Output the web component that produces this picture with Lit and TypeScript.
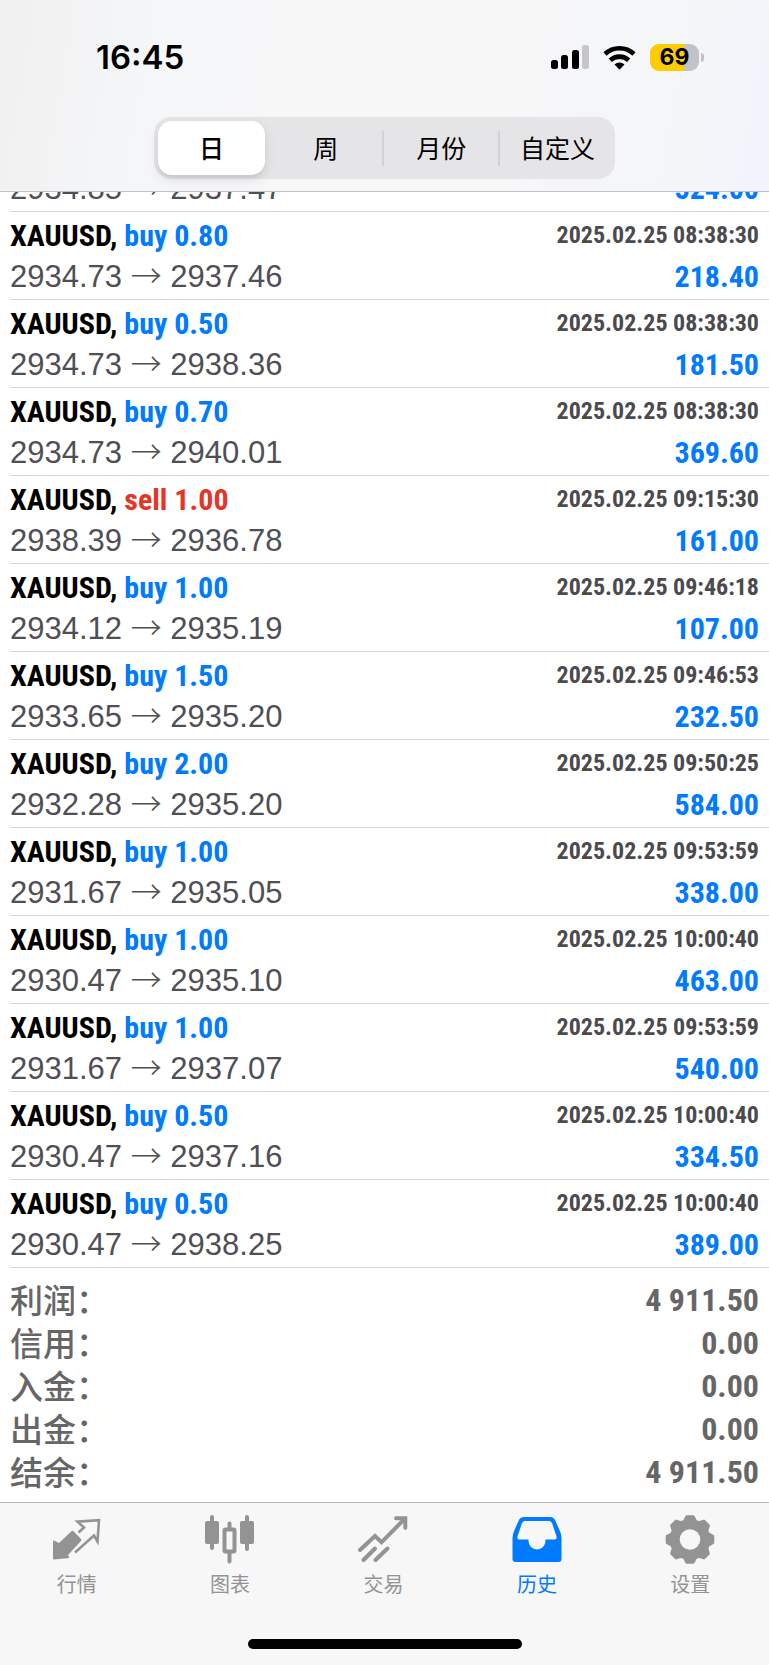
import { LitElement, html, svg, css, nothing } from "lit";
import { customElement, property, state } from "lit/decorators.js";
import { classMap } from "lit/directives/class-map.js";

interface Deal {
  side: "buy" | "sell";
  volume: string;
  open: string;
  close: string;
  time: string;
  profit: string;
}

const deal = (
  side: "buy" | "sell",
  volume: string,
  open: string,
  close: string,
  time: string,
  profit: string
): Deal => ({ side, volume, open, close, time: `2025.02.25 ${time}`, profit });

// The first deal is scrolled half under the header; only its price line shows.
const DEALS: Deal[] = [
  deal("buy", "", "2934.85", "2937.47", "", "524.00"),
  deal("buy", "0.80", "2934.73", "2937.46", "08:38:30", "218.40"),
  deal("buy", "0.50", "2934.73", "2938.36", "08:38:30", "181.50"),
  deal("buy", "0.70", "2934.73", "2940.01", "08:38:30", "369.60"),
  deal("sell", "1.00", "2938.39", "2936.78", "09:15:30", "161.00"),
  deal("buy", "1.00", "2934.12", "2935.19", "09:46:18", "107.00"),
  deal("buy", "1.50", "2933.65", "2935.20", "09:46:53", "232.50"),
  deal("buy", "2.00", "2932.28", "2935.20", "09:50:25", "584.00"),
  deal("buy", "1.00", "2931.67", "2935.05", "09:53:59", "338.00"),
  deal("buy", "1.00", "2930.47", "2935.10", "10:00:40", "463.00"),
  deal("buy", "1.00", "2931.67", "2937.07", "09:53:59", "540.00"),
  deal("buy", "0.50", "2930.47", "2937.16", "10:00:40", "334.50"),
  deal("buy", "0.50", "2930.47", "2938.25", "10:00:40", "389.00"),
];

const SUMMARY: [string, string][] = [
  ["利润：", "4 911.50"],
  ["信用：", "0.00"],
  ["入金：", "0.00"],
  ["出金：", "0.00"],
  ["结余：", "4 911.50"],
];

const PERIODS = ["日", "周", "月份", "自定义"];

// Outline of a gear with eight rounded teeth around (25, 25).
const gearPath = (() => {
  const points: string[] = [];
  const at = (radius: number, degrees: number) => {
    const a = (degrees * Math.PI) / 180;
    return `${(25 + radius * Math.sin(a)).toFixed(2)} ${(24.5 - radius * Math.cos(a)).toFixed(2)}`;
  };
  for (let i = 0; i < 8; i++) {
    const c = i * 45;
    points.push(at(19, c - 17), at(23, c - 8), at(23, c + 8), at(19, c + 17));
  }
  return `M${points.join("L")}Z`;
})();

const ICONS = {
  quotes: svg`
    <path d="M1 26.500V43.500q0 1 1 1L17.500 43l-1.500-3L29 26q1-1 0-2L21.500 16.300q-1-1-2 0L7 28 3 26q-2-1-2 .5z" fill="currentColor"/>
    <path d="M23 37.500L42 20.500 45.500 26.500 47 5.200 25.500 6.700 32 12.500 26.500 17.500" fill="none" stroke="currentColor" stroke-width="2.600"/>`,
  charts: svg`
    <g fill="currentColor">
      <rect x="0" y="6" width="14" height="23" rx="2"/><rect x="5" y="0" width="4" height="35" rx="2"/>
      <rect x="35" y="6" width="14" height="23" rx="2"/><rect x="40" y="0" width="4" height="36" rx="2"/>
      <rect x="22.500" y="6.500" width="4" height="9" rx="2"/><rect x="22.500" y="36" width="4" height="12.500" rx="2"/>
    </g>
    <rect x="19.500" y="14.500" width="10" height="22" rx="1" fill="none" stroke="currentColor" stroke-width="4"/>`,
  trade: svg`
    <g fill="none" stroke="currentColor" stroke-width="4" stroke-linecap="round" stroke-linejoin="miter">
      <path d="M2 35L17 21 23.500 27.300 46.500 4"/><path d="M38 3.300h9.300v9.400"/>
      <path d="M5.500 45L17 33.500"/><path d="M17.500 45L29.500 33.500"/>
    </g>`,
  history: svg`
    <path fill="currentColor" fill-rule="evenodd" d="M12 2h26q4 0 5.500 4l4 9q2 4 2 8v21q0 3-3 3h-43q-3 0-3-3V23q0-4 2-8l4-9Q8 2 12 2zM13 6q-2 0-3 2L5.500 21.500Q5 24.500 7 24.500h9.500V26a8.500 8.500 0 0 0 17 0v-1.500H43q2 0 1.500-3L40 8q-1-2-3-2z"/>`,
  settings: svg`
    <path d=${gearPath} fill="currentColor" stroke="currentColor" stroke-width="3" stroke-linejoin="round"/>
    <circle class="hub" cx="25" cy="24.500" r="10.300"/>`,
};

const TABS: { key: keyof typeof ICONS; label: string }[] = [
  { key: "quotes", label: "行情" },
  { key: "charts", label: "图表" },
  { key: "trade", label: "交易" },
  { key: "history", label: "历史" },
  { key: "settings", label: "设置" },
];

@customElement("status-bar")
class StatusBar extends LitElement {
  static styles = css`
    :host {
      display: flex;
      justify-content: space-between;
      align-items: center;
      height: 40px;
      padding: 0 65px 0 96px;
      font-family: Inter, "Liberation Sans", sans-serif;
      color: #000;
    }
    .time { font-size: 33px; line-height: 40px; font-weight: 600; }
    .indicators { display: flex; align-items: center; gap: 14px; }
    .signal, .wifi { display: block; }
    .battery { display: flex; align-items: center; gap: 2px; }
    .cell {
      width: 49px;
      height: 27px;
      border-radius: 9px;
      background: linear-gradient(90deg, #ffcc00 70%, #c3c3c7 70%);
      font-size: 23px;
      line-height: 27px;
      font-weight: 700;
      text-align: center;
    }
    .nub { width: 3px; height: 9px; border-radius: 0 3px 3px 0; background: #c3c3c7; }
  `;
  render() {
    return html`
      <span class="time">16:45</span>
      <div class="indicators">
        <svg class="signal" width="38" height="25" viewBox="0 0 38 25" aria-hidden="true">
          <rect x="0" y="15" width="7" height="9" rx="2.500"/>
          <rect x="10" y="10" width="7" height="14" rx="2.500"/>
          <rect x="21" y="5" width="7" height="19" rx="2.500"/>
          <rect x="31" y="0" width="7" height="24" rx="2.500" fill="#c6c6c8"/>
        </svg>
        <svg class="wifi" width="33" height="25" viewBox="0 0 33 25" aria-hidden="true">
          <g fill="none" stroke="#000" stroke-width="4.600">
            <path d="M2 9a21 21 0 0 1 29 0"/><path d="M7.300 15.200a13.500 13.500 0 0 1 18.400 0"/>
          </g>
          <path d="M11.500 19.500a7.500 7.500 0 0 1 10 0l-4 4.300q-1 1-2 0z"/>
        </svg>
        <div class="battery"><div class="cell">69</div><div class="nub"></div></div>
      </div>
    `;
  }
}

@customElement("period-picker")
class PeriodPicker extends LitElement {
  @state() private selected = 0;
  static styles = css`
    :host { display: flex; justify-content: center; }
    .track {
      display: grid;
      grid-template-columns: repeat(4, 1fr);
      width: 60%;
      height: 62px;
      border-radius: 17px;
      background: #e5e5e7;
    }
    .segment {
      display: flex;
      align-items: center;
      padding: 4px 0;
      border: 0;
      background: none;
      color: #000;
      font: 400 25px/34px "Noto Sans CJK SC", sans-serif;
    }
    .label { flex: 1; height: 54px; line-height: 52px; margin: 0 4px; border-radius: 14px; white-space: nowrap; }
    .divided::after { content: ""; width: 2px; height: 35px; background: #d2d2d5; }
    .selected .label {
      background: #fff;
      font-weight: 500;
      box-shadow: 0 5px 12px rgba(0, 0, 0, 0.1), 0 3px 2px rgba(0, 0, 0, 0.04);
    }
  `;
  render() {
    return html`<div class="track" role="group">
      ${PERIODS.map((name, i) => {
        const divided = i < 3 && i !== this.selected && i + 1 !== this.selected;
        return html`<button
          type="button"
          class=${classMap({ segment: true, selected: i === this.selected, divided })}
          aria-pressed=${i === this.selected}
          @click=${() => (this.selected = i)}
        ><span class="label">${name}</span></button>`;
      })}
    </div>`;
  }
}

@customElement("deal-row")
class DealRow extends LitElement {
  @property({ attribute: false }) deal!: Deal;
  static styles = css`
    :host {
      display: block;
      flex: none;
      margin-left: 10px;
      padding: 3px 10px 2px 0;
      border-bottom: 1px solid #d4d4d6;
      font: 700 30px/40px "Roboto Condensed", "Liberation Sans", sans-serif;
      white-space: nowrap;
    }
    .line { display: flex; justify-content: space-between; align-items: center; line-height: 41px; }
    .symbol { color: #000; }
    .buy, .profit { color: #007aff; }
    .sell { color: #e63527; }
    .time { color: #4a4a4f; font-size: 24px; }
    .prices { color: #4f4f55; font: 400 31px/40px "Liberation Sans", sans-serif; }
    .arrow { font-family: "Noto Sans CJK SC", sans-serif; font-weight: 300; line-height: 1; }
  `;
  render() {
    const d = this.deal;
    const heading = html`<div class="line">
      <span class="symbol">XAUUSD, <span class=${d.side}>${d.side} ${d.volume}</span></span>
      <span class="time">${d.time}</span>
    </div>`;
    return html`
      ${d.volume ? heading : nothing}
      <div class="line">
        <span class="prices">${d.open} <span class="arrow">→</span> ${d.close}</span>
        <span class="profit">${d.profit}</span>
      </div>
    `;
  }
}

@customElement("account-summary")
class AccountSummary extends LitElement {
  static styles = css`
    :host { display: block; flex: none; padding: 11px 10px 8px; }
    .list { margin: 0; color: #666; }
    .line { display: flex; justify-content: space-between; align-items: flex-start; }
    .name { font: 500 33px/40px "Noto Sans CJK SC", sans-serif; }
    .value { margin: 0; font: 700 32px/43px "Roboto Condensed", "Liberation Sans", sans-serif; }
  `;
  render() {
    return html`<dl class="list">
      ${SUMMARY.map(
        ([name, value]) => html`<div class="line"><dt class="name">${name}</dt><dd class="value">${value}</dd></div>`
      )}
    </dl>`;
  }
}

@customElement("tab-bar")
class TabBar extends LitElement {
  @state() private active = "history";
  static styles = css`
    :host { display: block; background: #f7f7f7; border-top: 1px solid #b4b4b6; }
    .tabs { display: grid; grid-template-columns: repeat(5, 1fr); padding: 12px 2px 0 0; }
    .tab {
      display: flex;
      flex-direction: column;
      align-items: center;
      gap: 5px;
      padding: 0;
      border: 0;
      background: none;
      color: #939393;
      font: 400 20px/28px "Noto Sans CJK SC", sans-serif;
    }
    .active { color: #007aff; }
    .icon { display: block; }
    .hub { fill: #f7f7f7; }
    .home { width: 274px; height: 10px; margin: 41px auto 16px; border-radius: 5px; background: #000; }
  `;
  render() {
    return html`
      <nav class="tabs">
        ${TABS.map(
          (t) => html`<button
            type="button"
            class=${classMap({ tab: true, active: t.key === this.active })}
            @click=${() => (this.active = t.key)}
          ><svg class="icon" width="50" height="50" viewBox="0 0 50 50" aria-hidden="true">${ICONS[t.key]}</svg>${t.label}</button>`
        )}
      </nav>
      <div class="home"></div>
    `;
  }
}

@customElement("app-root")
class AppRoot extends LitElement {
  static styles = css`
    :host { display: flex; flex-direction: column; height: 100vh; background: #fff; overflow: hidden; }
    .header {
      flex: none;
      padding: 37px 0 12px;
      border-bottom: 1px solid #c2c2c4;
      background: linear-gradient(100deg, #f0f0f0 0%, #f5f6f8 20%, #f7f7f7 50%, #f5f6f8 85%, #f0f4fb 100%);
    }
    .periods { margin-top: 40px; }
    .history { flex: 1; min-height: 0; display: flex; flex-direction: column; justify-content: flex-end; overflow: hidden; }
    .footer { flex: none; }
  `;
  render() {
    return html`
      <header class="header">
        <status-bar></status-bar>
        <period-picker class="periods"></period-picker>
      </header>
      <main class="history">
        ${DEALS.map((d) => html`<deal-row .deal=${d}></deal-row>`)}
        <account-summary></account-summary>
      </main>
      <tab-bar class="footer"></tab-bar>
    `;
  }
}
